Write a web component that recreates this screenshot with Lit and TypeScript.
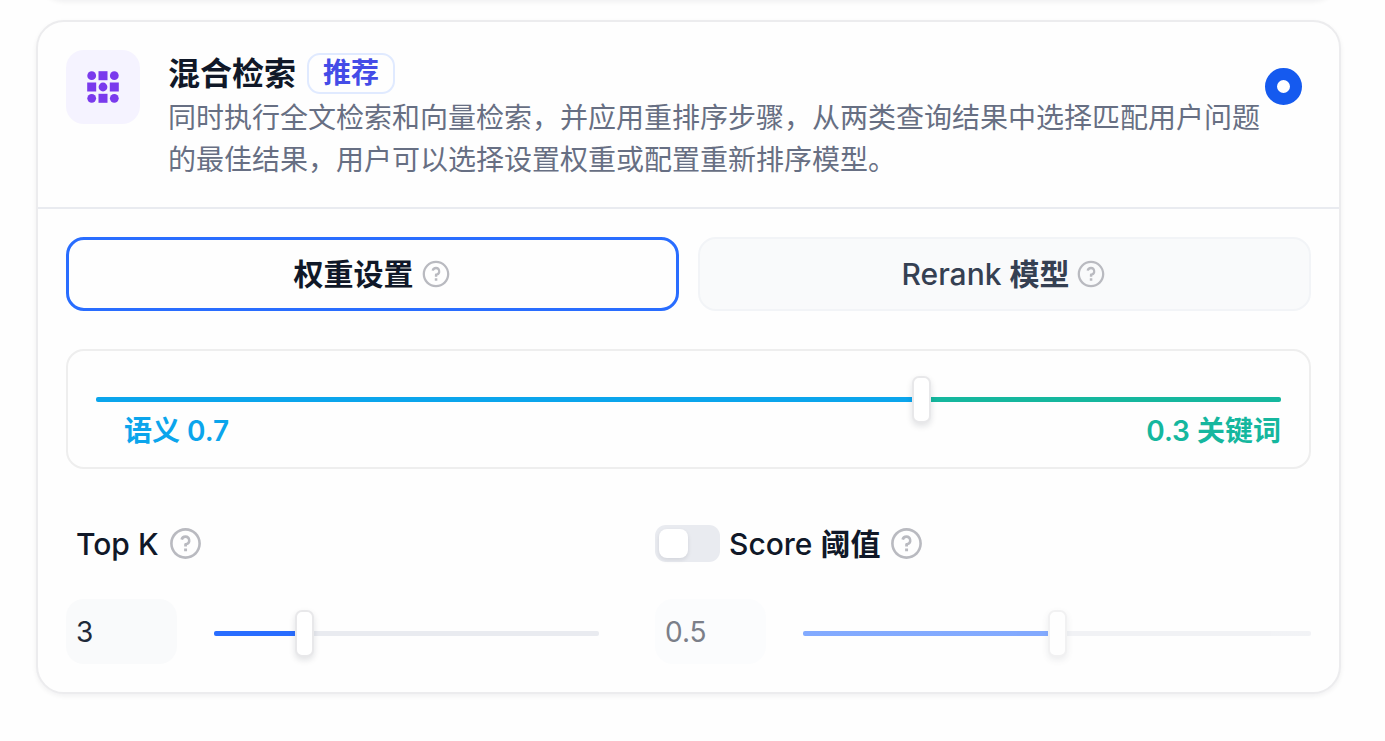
import { LitElement, css, html, svg, nothing } from "lit";
import { customElement, property, state } from "lit/decorators.js";
import { classMap } from "lit/directives/class-map.js";
import { styleMap } from "lit/directives/style-map.js";

@customElement("help-icon")
class HelpIcon extends LitElement {
  static styles = css`
    :host {
      display: inline-flex;
      color: #b9bac0;
    }
    .glyph {
      display: block;
      width: var(--help-size, 32px);
      height: var(--help-size, 32px);
      fill: currentColor;
    }
  `;

  render() {
    return html`<svg class="glyph" viewBox="0 0 24 24" aria-hidden="true">
      <path
        d="M12 22C6.477 22 2 17.523 2 12S6.477 2 12 2s10 4.477 10 10-4.477 10-10 10Zm0-1.7a8.3 8.3 0 1 0 0-16.6 8.3 8.3 0 0 0 0 16.6ZM11.1 15.2h1.9V17h-1.9v-1.8ZM12.95 13.2v.8h-1.8v-1.5c0-.5.4-.9.9-.9.9 0 1.55-.75 1.55-1.6 0-.9-.7-1.6-1.6-1.6-.76 0-1.4.53-1.56 1.25l-1.77-.35A3.4 3.4 0 0 1 12 6.6a3.4 3.4 0 0 1 .95 6.6Z"
      />
    </svg>`;
  }
}

@customElement("range-slider")
class RangeSlider extends LitElement {
  @property({ type: Number }) min = 0;
  @property({ type: Number }) max = 1;
  @property({ type: Number }) step = 0.1;
  @property({ type: Number }) value = 0;
  @property({ type: Boolean, reflect: true }) disabled = false;
  @property() label = "";

  static styles = css`
    :host {
      display: block;
      min-width: 0;
    }
    :host([disabled]) {
      opacity: 0.58;
    }
    .range {
      display: block;
      box-sizing: border-box;
      width: 100%;
      height: 47px;
      margin: 0;
      background: none;
      appearance: none;
      cursor: pointer;
    }
    .range:disabled {
      cursor: not-allowed;
    }
    .range::-webkit-slider-runnable-track {
      height: 5px;
      border-radius: 2px;
      background: linear-gradient(
        to right,
        var(--fill, #296dff) var(--progress),
        var(--rest, #e9ebf0) var(--progress)
      );
    }
    .range::-webkit-slider-thumb {
      appearance: none;
      box-sizing: border-box;
      width: 19px;
      height: 47px;
      margin-top: -21px;
      border: 2px solid #e8e8ea;
      border-radius: 7px;
      background: #fff;
      box-shadow: 0 3px 6px rgba(16, 24, 40, 0.12);
    }
  `;

  private onInput(e: Event) {
    this.value = Number((e.target as HTMLInputElement).value);
    this.dispatchEvent(new CustomEvent("slide", { detail: this.value }));
  }

  render() {
    const progress = ((this.value - this.min) / (this.max - this.min)) * 100;
    return html`<input
      class="range"
      type="range"
      aria-label=${this.label}
      min=${this.min}
      max=${this.max}
      step=${this.step}
      .value=${String(this.value)}
      ?disabled=${this.disabled}
      style=${styleMap({ "--progress": `${progress}%` })}
      @input=${this.onInput}
    />`;
  }
}

@customElement("app-root")
class AppRoot extends LitElement {
  @state() private mode: "weight" | "rerank" = "weight";
  @state() private semantic = 0.7;
  @state() private topK = 3;
  @state() private score = 0.5;
  @state() private scoreOn = false;

  static styles = css`
    :host {
      display: block;
      overflow: hidden;
      background: #fefefe;
      color: #101828;
      font-family: Inter, "Noto Sans CJK SC", sans-serif;
    }
    .page {
      display: flex;
      flex-direction: column;
      gap: 20px;
      padding: 0 44px 48px 36px;
    }
    .card {
      border: 2px solid #ececee;
      border-radius: 28px;
      background: #fefefe;
      box-shadow: 0 2px 5px rgba(16, 24, 40, 0.06);
    }
    .previous {
      height: 60px;
      margin-top: -64px;
    }
    .head {
      display: flex;
      align-items: flex-start;
      padding: 28px 37px 26px 28px;
      border-bottom: 2px solid #e9ebf0;
      cursor: pointer;
    }
    .tile {
      display: grid;
      flex: none;
      place-items: center;
      width: 74px;
      height: 74px;
      margin-right: 28px;
      border-radius: 18px;
      background: #f5f3ff;
    }
    .dots {
      width: 32px;
      height: 32px;
      fill: #7a3aed;
    }
    .copy {
      flex: 1;
      min-width: 0;
    }
    .title-row {
      display: flex;
      align-items: center;
      gap: 11px;
      height: 47px;
    }
    .title {
      margin: 0;
      font-size: 32px;
      font-weight: 600;
      line-height: 47px;
    }
    .badge {
      padding: 0 14px;
      border: 2px solid #e0eaff;
      border-radius: 13px;
      color: #444ce7;
      font-size: 28px;
      font-weight: 600;
      line-height: 37px;
    }
    .desc {
      margin: 0;
      color: #676f83;
      font-size: 28px;
      line-height: 42px;
    }
    .choice {
      flex: none;
      box-sizing: border-box;
      width: 37px;
      height: 37px;
      margin: 18px 0 0;
      border: 12px solid #155aef;
      border-radius: 50%;
      background: #fff;
      appearance: none;
    }
    .body {
      padding: 28px;
    }
    .tabs {
      display: grid;
      grid-template-columns: 1fr 1fr;
      gap: 19px;
    }
    .tab {
      display: flex;
      align-items: center;
      justify-content: center;
      gap: 6px;
      height: 74px;
      padding: 0;
      border: 2px solid #f2f4f7;
      border-radius: 18px;
      background: #f9fafb;
      color: #354052;
      font: inherit;
      font-size: 30px;
      font-weight: 500;
      line-height: 44px;
      cursor: pointer;
    }
    .tab.active {
      border: 3px solid #296dff;
      background: #fefefe;
      color: #101828;
    }
    .han {
      font-weight: 600;
    }
    .weights {
      margin-top: 38px;
      padding: 25px 28px 16px;
      border: 2px solid #eee;
      border-radius: 18px;
    }
    .weights-slider {
      --fill: #0ba5ec;
      --rest: #15b79e;
    }
    .legend {
      display: flex;
      justify-content: space-between;
      padding-left: 28px;
      height: 28px;
      font-size: 28px;
      font-weight: 600;
      line-height: 16px;
    }
    .semantic {
      color: #0ba5ec;
    }
    .keyword {
      color: #15b79e;
    }
    .params {
      display: grid;
      grid-template-columns: 533fr 656fr;
      gap: 56px;
      margin-top: 56px;
    }
    .param-head {
      display: flex;
      align-items: center;
      height: 37px;
      font-size: 30px;
      font-weight: 500;
      --help-size: 37px;
    }
    .param-head.indented {
      padding-left: 10px;
    }
    .param-label {
      margin-right: 8px;
      line-height: 38px;
    }
    .switch {
      display: flex;
      flex: none;
      box-sizing: border-box;
      width: 65px;
      height: 37px;
      margin: 0 9px 0 0;
      padding: 4px;
      border: 0;
      border-radius: 11px;
      background: #e9ebf0;
      appearance: none;
      cursor: pointer;
    }
    .switch::before {
      width: 29px;
      height: 29px;
      border-radius: 8px;
      background: #fff;
      box-shadow: 0 2px 4px rgba(16, 24, 40, 0.1);
      content: "";
    }
    .switch:checked {
      justify-content: flex-end;
      background: #296dff;
    }
    .param-controls {
      display: grid;
      grid-template-columns: 111px 1fr;
      gap: 37px;
      align-items: center;
      margin-top: 37px;
    }
    .param-slider {
      padding-top: 4px;
    }
    .number {
      box-sizing: border-box;
      width: 100%;
      height: 65px;
      padding: 0 10px;
      border: 0;
      border-radius: 18px;
      background: #f9fafb;
      color: #202939;
      font: inherit;
      font-size: 28px;
      appearance: textfield;
    }
    .number::-webkit-inner-spin-button {
      appearance: none;
      margin: 0;
    }
    .number:disabled {
      background: #fbfcfd;
      color: #7b7f89;
    }
  `;

  private dots() {
    const stops = [4.7, 16, 27.3];
    return stops.map((y, row) =>
      stops.map((x, col) =>
        (row + col) % 2 === 0
          ? svg`<circle cx=${x} cy=${y} r="4.4" />`
          : svg`<rect x=${x - 4.5} y=${y - 4.5} width="9" height="9" />`
      )
    );
  }

  private tab(id: "weight" | "rerank", text: unknown) {
    const active = this.mode === id;
    return html`<button
      type="button"
      role="tab"
      aria-selected=${active}
      class=${classMap({ tab: true, active })}
      @click=${() => (this.mode = id)}
    >
      <span>${text}</span><help-icon></help-icon>
    </button>`;
  }

  render() {
    const keyword = Math.round((1 - this.semantic) * 10) / 10;
    return html`
      <main class="page">
        <div class="card previous"></div>
        <section class="card">
          <label class="head" for="hybrid">
            <span class="tile">
              <svg class="dots" viewBox="0 0 32 32" aria-hidden="true">
                ${this.dots()}
              </svg>
            </span>
            <div class="copy">
              <div class="title-row">
                <h2 class="title">混合检索</h2>
                <span class="badge">推荐</span>
              </div>
              <p class="desc">
                同时执行全文检索和向量检索，并应用重排序步骤，从两类查询结果中选择匹配用户问题的最佳结果，用户可以选择设置权重或配置重新排序模型。
              </p>
            </div>
            <input id="hybrid" class="choice" type="radio" name="method" checked />
          </label>

          <div class="body">
            <div class="tabs" role="tablist">
              ${this.tab("weight", html`<span class="han">权重设置</span>`)}
              ${this.tab("rerank", html`Rerank <span class="han">模型</span>`)}
            </div>

            ${this.mode === "weight"
              ? html`<div class="weights">
                  <range-slider
                    class="weights-slider"
                    label="语义"
                    .value=${this.semantic}
                    @slide=${(e: CustomEvent) => (this.semantic = e.detail)}
                  ></range-slider>
                  <div class="legend">
                    <span class="semantic">语义 ${this.semantic}</span>
                    <span class="keyword">${keyword} 关键词</span>
                  </div>
                </div>`
              : nothing}

            <div class="params">
              <div>
                <div class="param-head indented">
                  <label class="param-label" for="top-k">Top K</label>
                  <help-icon></help-icon>
                </div>
                <div class="param-controls">
                  <input
                    id="top-k"
                    class="number"
                    type="number"
                    min="1"
                    max="10"
                    .value=${String(this.topK)}
                    @input=${(e: Event) =>
                      (this.topK = Number((e.target as HTMLInputElement).value))}
                  />
                  <range-slider
                    class="param-slider"
                    label="Top K"
                    .min=${1}
                    .max=${10}
                    .step=${1}
                    .value=${this.topK}
                    @slide=${(e: CustomEvent) => (this.topK = e.detail)}
                  ></range-slider>
                </div>
              </div>

              <div>
                <div class="param-head">
                  <input
                    id="score-on"
                    class="switch"
                    type="checkbox"
                    role="switch"
                    .checked=${this.scoreOn}
                    @change=${(e: Event) =>
                      (this.scoreOn = (e.target as HTMLInputElement).checked)}
                  />
                  <label class="param-label" for="score-on"
                    >Score <span class="han">阈值</span></label
                  >
                  <help-icon></help-icon>
                </div>
                <div class="param-controls">
                  <input
                    class="number"
                    type="number"
                    aria-label="Score 阈值"
                    min="0"
                    max="1"
                    step="0.1"
                    .value=${String(this.score)}
                    ?disabled=${!this.scoreOn}
                    @input=${(e: Event) =>
                      (this.score = Number((e.target as HTMLInputElement).value))}
                  />
                  <range-slider
                    class="param-slider"
                    label="Score 阈值"
                    .value=${this.score}
                    ?disabled=${!this.scoreOn}
                    @slide=${(e: CustomEvent) => (this.score = e.detail)}
                  ></range-slider>
                </div>
              </div>
            </div>
          </div>
        </section>
      </main>
    `;
  }
}
